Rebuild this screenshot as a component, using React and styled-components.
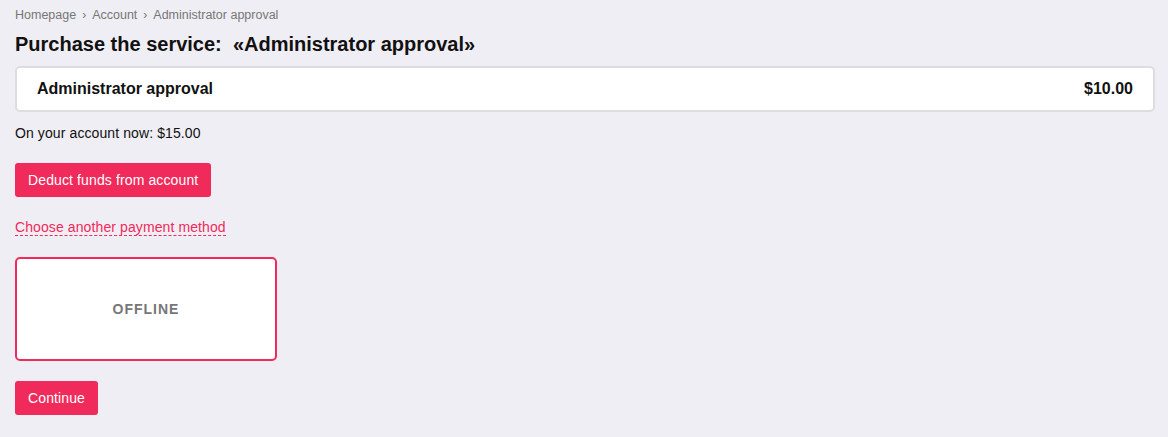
import styled, { createGlobalStyle } from 'styled-components';

const GlobalStyle = createGlobalStyle`
  html, body {
    margin: 0;
    padding: 0;
    background: #efeef4;
    font-family: Arial, "Liberation Sans", sans-serif;
    color: #111;
  }
`;

const ACCENT = '#f02a5a';

export default function App() {
  return (
    <>
      <GlobalStyle />
      <Page>
        <Breadcrumbs>
          <Crumb>Homepage</Crumb>
          <Sep>›</Sep>
          <Crumb>Account</Crumb>
          <Sep>›</Sep>
          <Crumb>Administrator approval</Crumb>
        </Breadcrumbs>
        <Title>Purchase the service:&nbsp; «Administrator approval»</Title>

        <ServiceRow>
          <span>Administrator approval</span>
          <span>$10.00</span>
        </ServiceRow>

        <Balance>On your account now: $15.00</Balance>

        <Button>Deduct funds from account</Button>

        <DashedLink href="#">Choose another payment method</DashedLink>

        <MethodCard $active>OFFLINE</MethodCard>

        <Button>Continue</Button>
      </Page>
    </>
  );
}

const Page = styled.div`
  display: flex;
  flex-direction: column;
  align-items: flex-start;
  padding: 8px 13px 22px 15px;
`;

const Breadcrumbs = styled.div`
  display: flex;
  align-items: center;
  gap: 6px;
  font-size: 12.5px;
  color: #777;
  line-height: 14px;
`;

const Crumb = styled.span``;

const Sep = styled.span`
  font-size: 12px;
`;

const Title = styled.h1`
  margin: 10px 0 0;
  font-size: 20px;
  line-height: 24px;
  font-weight: 700;
  color: #111;
`;

const ServiceRow = styled.div`
  align-self: stretch;
  box-sizing: border-box;
  margin-top: 10px;
  height: 46px;
  display: flex;
  align-items: center;
  justify-content: space-between;
  padding: 0 20px;
  background: #fff;
  border: 2px solid #dddddf;
  border-radius: 5px;
  font-size: 16px;
  font-weight: 700;
`;

const Balance = styled.div`
  margin-top: 13px;
  font-size: 14px;
  line-height: 16px;
  letter-spacing: 0.1px;
`;

const Button = styled.button`
  margin-top: 22px;
  height: 34px;
  padding: 0 13px;
  border: none;
  border-radius: 3px;
  background: ${ACCENT};
  color: #fff;
  font-family: inherit;
  font-size: 14px;
  letter-spacing: 0.12px;
  cursor: pointer;
`;

const DashedLink = styled.a`
  margin-top: 22px;
  font-size: 14px;
  line-height: 16px;
  letter-spacing: 0.1px;
  color: ${ACCENT};
  text-decoration: none;
  border-bottom: 1px dashed ${ACCENT};
`;

const MethodCard = styled.div`
  box-sizing: border-box;
  margin-top: 21px;
  width: 262px;
  height: 104px;
  display: flex;
  align-items: center;
  justify-content: center;
  background: #fff;
  border: 2px solid ${({ $active }) => ($active ? ACCENT : '#dddddf')};
  border-radius: 5px;
  font-size: 14px;
  font-weight: 700;
  letter-spacing: 1px;
  color: #777;
  & + ${Button} {
    margin-top: 20px;
  }
`;
